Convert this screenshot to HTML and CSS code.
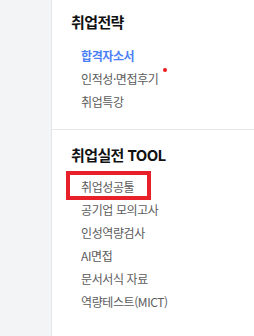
FILE: index.html
```html
<!DOCTYPE html>
<html lang="ko">
<head>
    <meta charset="UTF-8">
    <meta name="viewport" content="width=device-width, initial-scale=1.0">
    <title>취업 메뉴</title>
    <link rel="stylesheet" href="styles.css">
</head>
<body>
    <div class="layout">
        <div class="side"></div>
        <div class="menu">
            <div class="section">
                <h2>취업전략</h2>
                <ul>
                    <li class="active"><a href="#">합격자소서</a></li>
                    <li><a href="#" class="new">인적성·면접후기</a></li>
                    <li><a href="#">취업특강</a></li>
                </ul>
            </div>
            <div class="section">
                <h2>취업실전 TOOL</h2>
                <ul>
                    <li class="marked"><a href="#">취업성공툴</a></li>
                    <li><a href="#">공기업 모의고사</a></li>
                    <li><a href="#">인성역량검사</a></li>
                    <li><a href="#">AI면접</a></li>
                    <li><a href="#">문서서식 자료</a></li>
                    <li><a href="#">역량테스트(MICT)</a></li>
                </ul>
            </div>
        </div>
    </div>
</body>
</html>
```

FILE: styles.css
```css
body {
    margin: 0;
    padding: 0;
    font-family: "Noto Sans CJK KR", "Noto Sans", sans-serif;
    background-color: #fff;
}
.layout {
    display: flex;
    min-height: 336px;
}
.side {
    width: 51px;
    background-color: #f3f4f6;
    border-right: 1px solid #e4e5e8;
}
.menu {
    flex: 1;
}
.section {
    padding: 12px 0 16px 19px;
    border-bottom: 1px solid #e8e8e8;
}
.section + .section {
    padding-top: 15px;
    border-bottom: none;
}
h2 {
    margin: 0;
    font-size: 15px;
    line-height: 20px;
    font-weight: bold;
    color: #111;
    letter-spacing: -0.6px;
}
ul {
    list-style: none;
    margin: 12px 0 0 0;
    padding: 0 0 0 10px;
}
.section + .section ul {
    margin-top: 10px;
}
li {
    position: relative;
    font-size: 12px;
    line-height: 23px;
    letter-spacing: -0.4px;
}
li a {
    position: relative;
    color: #5c5c5c;
    text-decoration: none;
}
li.active a {
    color: #4b80f5;
    font-weight: bold;
}
.new::after {
    content: "";
    position: absolute;
    right: -9px;
    top: -2px;
    width: 4px;
    height: 4px;
    border-radius: 50%;
    background-color: #f01818;
}
/* red highlight box */
.marked::after {
    content: "";
    position: absolute;
    left: -15px;
    top: -4px;
    width: 77px;
    height: 21px;
    border: 4px solid #e8202a;
}
```
